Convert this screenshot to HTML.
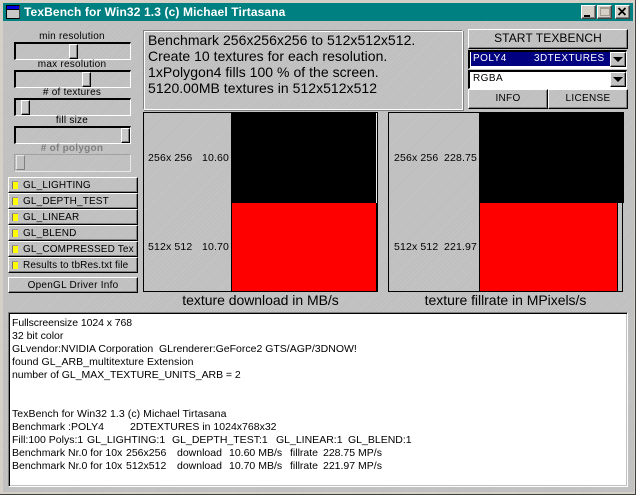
<!DOCTYPE html>
<html><head><meta charset="utf-8">
<style>
html,body{margin:0;padding:0;background:#d4d0c8}
body{width:636px;height:495px;position:relative;overflow:hidden;font-family:"Liberation Sans",sans-serif;color:#000}
div{position:absolute;box-sizing:border-box;white-space:pre}
#win{left:0;top:0;width:636px;height:495px;background:#d4d0c8;border-right:1px solid #404040;border-bottom:1px solid #404040}
#client{left:3px;top:21px;width:631px;height:471px;background-color:#c0c0c0;background-image:repeating-linear-gradient(135deg,#c6c6c6 0 1px,#bcbcbc 1px 2px)}
#title{left:3px;top:3px;width:630px;height:18px;background:#008080;color:#fff;font:bold 12px/18px "Liberation Sans",sans-serif;letter-spacing:.12px;padding-left:21px}
.abs{position:absolute}
.lbl{left:14px;width:116px;text-align:center;font-size:10px;line-height:13px;letter-spacing:.25px}
.track{left:14px;width:117px;height:18px;border:1px solid;border-color:#000 #fff #fff #000;border-top-width:2px;border-left-width:2px}
.thumb{width:9px;height:15px;background:#c8c8c8;border:1px solid;border-color:#fff #000 #000 #fff;box-shadow:inset -1px -1px 0 #808080}
.btn{background-color:#c0c0c0;background-image:repeating-linear-gradient(135deg,#c6c6c6 0 1px,#bcbcbc 1px 2px);border:1px solid;border-color:#fff #000 #000 #fff;box-shadow:inset -1px -1px 0 #808080;text-align:center;font-size:10px;letter-spacing:.25px}
.chk{left:8px;width:130px;height:16px;text-align:left;padding-left:14px;line-height:15px;letter-spacing:.15px;overflow:hidden}
.chk i{position:absolute;left:3px;top:3px;background:#ff0;border-left:1px solid #777;border-top:1px solid #999;box-sizing:content-box;width:5px;height:7px}
.chart{top:112px;width:235px;height:180px;border:1px solid #000}
.v{font-size:10.5px;line-height:12px;letter-spacing:.15px}
.cap{top:292px;font-size:14px;line-height:16px;text-align:center;letter-spacing:-.03px}
.info{left:148px;font-size:14px;line-height:16px;letter-spacing:.03px}
.m{font-size:10.5px;line-height:13px;letter-spacing:0}
.arrow{width:0;height:0;border-left:5px solid transparent;border-right:5px solid transparent;border-top:5px solid #000}
.sbtn{top:5px;width:15px;height:14px;background:#d4d0c8;border:1px solid;border-color:#fff #404040 #404040 #fff;box-shadow:inset -1px -1px 0 #808080}
.cb{color:#000;font-size:10px;line-height:14px;letter-spacing:.45px}
</style></head><body>
<div id="win"></div>
<div id="client"></div>
<div id="title">TexBench for Win32 1.3 (c) Michael Tirtasana</div>
<div class="abs" style="left:6px;top:5px;width:14px;height:14px;background:#c8c8c8;border:1px solid #000;border-right-color:#404040"></div>
<div class="abs" style="left:7px;top:6px;width:12px;height:3px;background:#0000e0"></div>
<div class="abs" style="left:7px;top:9px;width:12px;height:1px;background:#000"></div>

<div class="sbtn" style="left:581px"></div><div class="abs" style="left:584px;top:15px;width:6px;height:2px;background:#000"></div>
<div class="sbtn" style="left:597px"></div><div class="abs" style="left:600px;top:7px;width:10px;height:9px;border:1px solid #a09c90;border-top-width:2px"></div>
<div class="sbtn" style="left:615px"></div>
<svg class="abs" style="position:absolute;left:615px;top:5px" width="15" height="14"><path d="M3.5 3 L10.5 10 M10.5 3 L3.5 10" stroke="#000" stroke-width="1.8" fill="none"/></svg>

<div class="lbl" style="top:30px">min resolution</div>
<div class="track" style="top:42px"></div><div class="thumb" style="left:69px;top:44px"></div>
<div class="lbl" style="top:58px">max resolution</div>
<div class="track" style="top:70px"></div><div class="thumb" style="left:82px;top:72px"></div>
<div class="lbl" style="top:86px"># of textures</div>
<div class="track" style="top:98px"></div><div class="thumb" style="left:21px;top:100px"></div>
<div class="lbl" style="top:114px">fill size</div>
<div class="track" style="top:126px"></div><div class="thumb" style="left:121px;top:128px"></div>
<div class="lbl" style="top:142px;color:#808080;font-weight:bold"># of polygon</div>
<div class="track" style="top:154px;border-color:#a0a0a0 #e8e8e8 #e8e8e8 #a0a0a0;border-width:1px"></div><div class="thumb" style="left:16px;top:155px;background:#c0c0c0;border-color:#e8e8e8 #808080 #808080 #e8e8e8;box-shadow:none"></div>

<div class="btn chk" style="top:177px"><i></i>GL_LIGHTING</div>
<div class="btn chk" style="top:193px"><i></i>GL_DEPTH_TEST</div>
<div class="btn chk" style="top:209px"><i></i>GL_LINEAR</div>
<div class="btn chk" style="top:225px"><i></i>GL_BLEND</div>
<div class="btn chk" style="top:241px"><i></i>GL_COMPRESSED Tex</div>
<div class="btn chk" style="top:257px;letter-spacing:.12px"><i></i>Results to tbRes.txt file</div>
<div class="btn" style="left:8px;top:277px;width:130px;height:16px;line-height:15px">OpenGL Driver Info</div>

<div class="abs" style="left:143px;top:30px;width:320px;height:80px;border:1px solid;border-color:#808080 #fff #fff #808080;box-shadow:inset 1px 1px 0 #fff,1px 1px 0 #808080"></div>
<div class="info" style="top:32px">Benchmark 256x256x256 to 512x512x512.</div>
<div class="info" style="top:48px">Create 10 textures for each resolution.</div>
<div class="info" style="top:64px">1xPolygon4 fills 100 % of the screen.</div>
<div class="info" style="top:80px">5120.00MB textures in 512x512x512</div>

<div class="chart" style="left:143px"></div>
<div class="abs" style="left:231px;top:112px;width:145px;height:91px;background:#000"></div>
<div class="abs" style="left:376px;top:113px;width:1px;height:90px;background:#e8e8e8"></div>
<div class="abs" style="left:231px;top:203px;width:1px;height:89px;background:#000"></div>
<div class="abs" style="left:232px;top:203px;width:144px;height:88px;background:#f00"></div>
<div class="abs" style="left:376px;top:203px;width:2px;height:89px;background:#000"></div>
<div class="v" style="left:148px;top:152px">256x 256</div><div class="v" style="left:202px;top:152px">10.60</div>
<div class="v" style="left:148px;top:241px">512x 512</div><div class="v" style="left:202px;top:241px">10.70</div>
<div class="cap" style="left:143px;width:235px">texture download in MB/s</div>

<div class="chart" style="left:388px"></div>
<div class="abs" style="left:479px;top:112px;width:145px;height:91px;background:#000"></div>
<div class="abs" style="left:479px;top:203px;width:1px;height:89px;background:#000"></div>
<div class="abs" style="left:480px;top:203px;width:137px;height:88px;background:#f00"></div>
<div class="abs" style="left:617px;top:203px;width:1px;height:88px;background:#000"></div>
<div class="v" style="left:394px;top:152px">256x 256</div><div class="v" style="left:444px;top:152px">228.75</div>
<div class="v" style="left:394px;top:241px">512x 512</div><div class="v" style="left:444px;top:241px">221.97</div>
<div class="cap" style="left:388px;width:235px">texture fillrate in MPixels/s</div>

<div class="btn" style="left:468px;top:29px;width:160px;height:20px;font-size:12px;line-height:17px;letter-spacing:.1px">START TEXBENCH</div>

<div class="abs" style="left:468px;top:50px;width:159px;height:19px;background:#fff;border:1px solid;border-color:#000 #fff #fff #000;border-width:2px 1px 1px 2px"></div>
<div class="abs" style="left:471px;top:52px;width:139px;height:14px;background:#000080"></div>
<div class="abs cb" style="left:473px;top:52px;color:#fff">POLY4</div>
<div class="abs cb" style="left:534px;top:52px;color:#fff">3DTEXTURES</div>
<div class="btn abs" style="left:610px;top:52px;width:16px;height:15px"></div>
<div class="arrow abs" style="left:613px;top:57px"></div>

<div class="abs" style="left:468px;top:70px;width:159px;height:19px;background:#fff;border:1px solid;border-color:#000 #fff #fff #000;border-width:2px 1px 1px 2px"></div>
<div class="abs cb" style="left:473px;top:72px">RGBA</div>
<div class="btn abs" style="left:610px;top:72px;width:16px;height:15px"></div>
<div class="arrow abs" style="left:613px;top:77px"></div>

<div class="btn" style="left:468px;top:89px;width:80px;height:20px;line-height:17px;letter-spacing:.3px">INFO</div>
<div class="btn" style="left:548px;top:89px;width:80px;height:20px;line-height:17px;letter-spacing:.3px">LICENSE</div>

<div class="abs" style="left:8px;top:312px;width:620px;height:175px;background:#fff;border:1px solid;border-color:#808080 #fff #fff #808080;box-shadow:inset 1px 1px 0 #000,inset -1px -1px 0 #c0c0c0"></div>
<div class="m" style="left:12px;top:317px;letter-spacing:-.08px">Fullscreensize 1024 x 768</div>
<div class="m" style="left:12px;top:330px">32 bit color</div>
<div class="m" style="left:12px;top:343px">GLvendor:NVIDIA Corporation</div>
<div class="m" style="left:159px;top:343px">GLrenderer:GeForce2 GTS/AGP/3DNOW!</div>
<div class="m" style="left:12px;top:356px;letter-spacing:.05px">found GL_ARB_multitexture Extension</div>
<div class="m" style="left:12px;top:369px;letter-spacing:-.04px">number of GL_MAX_TEXTURE_UNITS_ARB = 2</div>
<div class="m" style="left:12px;top:408px;letter-spacing:.06px">TexBench for Win32 1.3 (c) Michael Tirtasana</div>
<div class="m" style="left:12px;top:421px">Benchmark :POLY4</div>
<div class="m" style="left:130px;top:421px">2DTEXTURES in 1024x768x32</div>
<div class="m" style="left:12px;top:434px">Fill:100 Polys:1</div>
<div class="m" style="left:87px;top:434px">GL_LIGHTING:1</div>
<div class="m" style="left:172px;top:434px">GL_DEPTH_TEST:1</div>
<div class="m" style="left:276px;top:434px">GL_LINEAR:1</div>
<div class="m" style="left:348px;top:434px">GL_BLEND:1</div>
<div class="m" style="left:12px;top:447px">Benchmark Nr.0 for 10x</div>
<div class="m" style="left:126px;top:447px">256x256</div>
<div class="m" style="left:177px;top:447px">download</div>
<div class="m" style="left:229px;top:447px">10.60 MB/s</div>
<div class="m" style="left:290px;top:447px">fillrate</div>
<div class="m" style="left:323px;top:447px">228.75 MP/s</div>
<div class="m" style="left:12px;top:460px">Benchmark Nr.0 for 10x</div>
<div class="m" style="left:126px;top:460px">512x512</div>
<div class="m" style="left:177px;top:460px">download</div>
<div class="m" style="left:229px;top:460px">10.70 MB/s</div>
<div class="m" style="left:290px;top:460px">fillrate</div>
<div class="m" style="left:323px;top:460px">221.97 MP/s</div>
</body></html>
